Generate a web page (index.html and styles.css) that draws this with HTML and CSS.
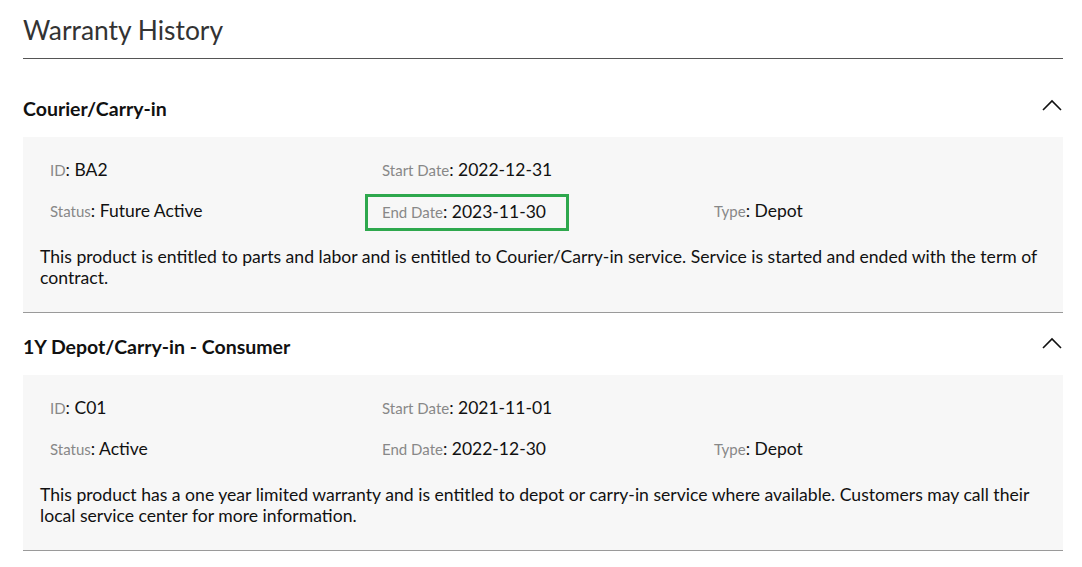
FILE: index.html
```html
<!DOCTYPE html>
<html lang="en">
<head>
  <meta charset="UTF-8" />
  <title>Warranty History</title>
  <link rel="stylesheet" href="styles.css">
</head>
<body>

  <div class="page">
    <h1>Warranty History</h1>

    <!-- Courier / Carry-in -->
    <div class="section first">
      <div class="sec-head">
        <span class="sec-title">Courier/Carry-in</span>
        <svg class="chevron" width="20" height="12" viewBox="0 0 20 12"><path d="M1 11 L10 2 L19 11" fill="none" stroke="#111" stroke-width="1.6"/></svg>
      </div>
      <div class="panel">
        <div class="row">
          <div class="cell"><span class="lbl">ID</span><span class="val">: BA2</span></div>
          <div class="cell"><span class="lbl">Start Date</span><span class="val">: 2022-12-31</span></div>
          <div class="cell"></div>
        </div>
        <div class="row">
          <div class="cell"><span class="lbl">Status</span><span class="val">: Future Active</span></div>
          <div class="cell"><span class="highlight"><span class="lbl">End Date</span><span class="val">: 2023-11-30</span></span></div>
          <div class="cell"><span class="lbl">Type</span><span class="val">: Depot</span></div>
        </div>
        <p class="desc">This product is entitled to parts and labor and is entitled to Courier/Carry-in service. Service is started and ended with the term of contract.</p>
      </div>
    </div>

    <!-- 1Y Depot -->
    <div class="section">
      <div class="sec-head">
        <span class="sec-title">1Y Depot/Carry-in - Consumer</span>
        <svg class="chevron" width="20" height="12" viewBox="0 0 20 12"><path d="M1 11 L10 2 L19 11" fill="none" stroke="#111" stroke-width="1.6"/></svg>
      </div>
      <div class="panel">
        <div class="row">
          <div class="cell"><span class="lbl">ID</span><span class="val">: C01</span></div>
          <div class="cell"><span class="lbl">Start Date</span><span class="val">: 2021-11-01</span></div>
          <div class="cell"></div>
        </div>
        <div class="row">
          <div class="cell"><span class="lbl">Status</span><span class="val">: Active</span></div>
          <div class="cell"><span class="lbl">End Date</span><span class="val">: 2022-12-30</span></div>
          <div class="cell"><span class="lbl">Type</span><span class="val">: Depot</span></div>
        </div>
        <p class="desc">This product has a one year limited warranty and is entitled to depot or carry-in service where available. Customers may call their local service center for more information.</p>
      </div>
    </div>
  </div>

</body>
</html>
```

FILE: styles.css
```css
body {
  margin: 0;
  background: #fff;
  font-family: Lato, "Open Sans", sans-serif;
  color: #111;
}
.page {
  padding: 0 19px 0 23px;
}
h1 {
  margin: 0;
  font-size: 26.4px;
  font-weight: normal;
  line-height: 32px;
  color: #333;
  padding-top: 14px;
  padding-bottom: 12px;
  border-bottom: 1px solid #555;
}
.section {
  border-bottom: 1px solid #9a9a9a;
}
.section.first {
  margin-top: 16px;
}
.sec-head {
  height: 57px;
  padding-top: 5px;
  display: flex;
  align-items: center;
  justify-content: space-between;
}
.sec-title {
  font-size: 19.5px;
  font-weight: bold;
  color: #111;
}
.chevron {
  margin-right: 1px;
  margin-top: -8px;
}
.panel {
  background: #f7f7f7;
  padding: 12px 12px 24px 17px;
}
.row {
  display: flex;
  height: 41px;
}
.cell {
  width: 332px;
  padding-left: 10px;
  box-sizing: border-box;
  display: flex;
  align-items: baseline;
  padding-top: 10px;
}
.lbl {
  font-size: 15px;
  color: #888;
}
.val {
  font-size: 17.5px;
  color: #111;
}
.highlight {
  display: flex;
  align-items: baseline;
  height: 37px;
  box-sizing: border-box;
  width: 204px;
  margin-left: -17px;
  margin-top: -6px;
  padding-left: 14px;
  padding-top: 4px;
  border: 3px solid #2ea84d;
}
.desc {
  margin: 15px 0 0 0;
  font-size: 17.6px;
  line-height: 21px;
  color: #111;
}
```
